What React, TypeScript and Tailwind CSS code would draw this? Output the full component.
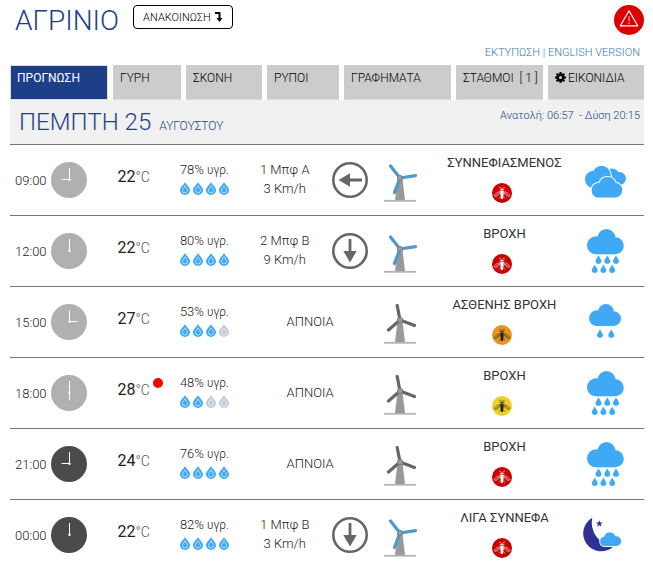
import React from 'react'

type Weather = 'cloudy' | 'rain' | 'lightRain' | 'night'
type Risk = 'red' | 'orange' | 'yellow'

interface IForecast {
  time: string
  hour: number
  night?: boolean
  temp: number
  max?: boolean
  humidity: number
  drops: number
  wind?: { force: string; speed: string; direction: number }
  label: string
  risk: Risk
  weather: Weather
}

const forecasts: IForecast[] = [
  {
    time: '09:00',
    hour: 9,
    temp: 22,
    humidity: 78,
    drops: 4,
    wind: { force: '1 Μπφ Α', speed: '3 Km/h', direction: 0 },
    label: 'ΣΥΝΝΕΦΙΑΣΜΕΝΟΣ',
    risk: 'red',
    weather: 'cloudy',
  },
  {
    time: '12:00',
    hour: 12,
    temp: 22,
    humidity: 80,
    drops: 4,
    wind: { force: '2 Μπφ Β', speed: '9 Km/h', direction: -90 },
    label: 'ΒΡΟΧΗ',
    risk: 'red',
    weather: 'rain',
  },
  { time: '15:00', hour: 3, temp: 27, humidity: 53, drops: 3, label: 'ΑΣΘΕΝΗΣ ΒΡΟΧΗ', risk: 'orange', weather: 'lightRain' },
  { time: '18:00', hour: 6, temp: 28, max: true, humidity: 48, drops: 2, label: 'ΒΡΟΧΗ', risk: 'yellow', weather: 'rain' },
  { time: '21:00', hour: 9, night: true, temp: 24, humidity: 76, drops: 4, label: 'ΒΡΟΧΗ', risk: 'red', weather: 'rain' },
  {
    time: '00:00',
    hour: 12,
    night: true,
    temp: 22,
    humidity: 82,
    drops: 4,
    wind: { force: '1 Μπφ Β', speed: '3 Km/h', direction: -90 },
    label: 'ΛΙΓΑ ΣΥΝΝΕΦΑ',
    risk: 'red',
    weather: 'night',
  },
]

const tabs = ['ΠΡΟΓΝΩΣΗ', 'ΓΥΡΗ', 'ΣΚΟΝΗ', 'ΡΥΠΟΙ', 'ΓΡΑΦΗΜΑΤΑ', 'ΣΤΑΘΜΟΙ\u00a0 [ 1 ]', 'ΕΙΚΟΝΙΔΙΑ']

const Gear = () => (
  <svg viewBox="0 0 11 11" className="mt-1 size-[11px]">
    <circle cx="5.5" cy="5.5" r="2.9" fill="none" stroke="#000" strokeWidth="2.6" />
    {[0, 45, 90, 135].map((angle) => (
      <path
        key={angle}
        d="M4.5 2V0h2v2M4.5 9v2h2V9"
        transform={`rotate(${angle} 5.5 5.5)`}
      />
    ))}
  </svg>
)

const Clock = ({ hour, night }: { hour: number; night?: boolean }) => (
  <svg viewBox="0 0 36 36" className="size-9 shrink-0">
    <circle cx="18" cy="18" r="18" fill={night ? '#4a4a4a' : '#b0b0ae'} />
    <path d="M18.5 18V6" stroke="#fff" strokeWidth="1" />
    <path d="M18.5 17.5V9.5" stroke="#fff" strokeWidth="1" transform={`rotate(${hour * 30} 18.5 17.5)`} />
    <circle cx="18.5" cy="17.7" r="1.2" fill="#fff" />
  </svg>
)

const HumidityDrop = ({ filled }: { filled: boolean }) => (
  <svg viewBox="0 0 10 13" className="h-[13px] w-[10px]">
    <path d="M5 0C6 2.6 10 5 10 8.2a5 4.8 0 0 1-10 0C0 5 4 2.6 5 0Z" fill={filled ? '#3fa9f5' : '#c0ccd4'} />
    <path
      d="M5 3.8C5.6 5.4 7.5 6.8 7.5 8.5a2.5 2.5 0 0 1-5 0C2.5 6.8 4.4 5.4 5 3.8Z"
      fill="none"
      stroke="#fff"
      strokeOpacity="0.75"
      strokeWidth="0.8"
    />
  </svg>
)

const WindArrow = ({ direction }: { direction: number }) => (
  <svg viewBox="0 0 36 36" className="mx-auto size-9">
    <circle cx="18" cy="18" r="16.7" fill="none" stroke="#666" strokeWidth="2.6" />
    <path d="M6.5 18 18 11.3v5.3h12v2.8H18v5.3Z" fill="#666" transform={`rotate(${direction} 18 18)`} />
  </svg>
)

const Turbine = ({ calm }: { calm: boolean }) => (
  <svg viewBox="0 0 34 40" className="mx-auto h-10 w-[34px]">
    <path d="M13.5 17h5L21 38H11Z" fill="#999" />
    <path d="M0 38.8h32" stroke="#b3b3b3" strokeWidth="1.8" />
    {calm ? (
      <path d="M16 16 13.2 1.5M16 16l14.5 5.5M16 16 4.5 26" stroke="#666" strokeWidth="3.2" strokeLinecap="round" />
    ) : (
      <path d="M16 16 6.5 4M16 16l15.5-2.4M16 16l-5.6 14.5" stroke="#4b9bcd" strokeWidth="3.2" strokeLinecap="round" />
    )}
    <circle cx="16" cy="16" r="2.7" fill="#999" stroke="#777" strokeWidth="0.8" />
  </svg>
)

const riskColors = { red: '#c80000', orange: '#e8951f', yellow: '#f0d028' }

const Insect = ({ risk }: { risk: Risk }) => {
  const color = risk === 'red' ? '#fff' : '#222'
  return (
    <svg viewBox="0 0 20 20" className="size-5">
      <circle cx="10" cy="10" r="10" fill={riskColors[risk]} />
      <g fill="none" stroke={color} strokeWidth="0.7" strokeOpacity="0.75">
        <path d="M8.5 8.5C5 9 2 11.2 2.3 13c1.7 1.3 5-.8 6-3.7M11.5 8.5C15 9 18 11.2 17.7 13c-1.7 1.3-5-.8-6-3.7" />
        <path d="M3.5 12.5 8 9.5M16.5 12.5 12 9.5M7 4.3h1.5l.5 1M13 4.3h-1.5l-.5 1M7.5 6.5h5M7.3 15.5l1-2M12.7 15.5l-1-2" />
      </g>
      <path d="M8.8 5.3h2.4V7H8.8Z" fill={color} fillOpacity="0.6" />
      <path d="M8.4 7.5h3.2v3.5l-.5 4.2L10 16.3l-1.1-1.1-.5-4.2Z" fill={color} />
    </svg>
  )
}

const Cloud = () => (
  <>
    <circle cx="9" cy="16.3" r="9" />
    <circle cx="19.5" cy="9" r="9" />
    <circle cx="28.3" cy="16.8" r="8.5" />
    <path d="M9 12h19v13.3H9Z" />
  </>
)

const RainDrop = ({ x, y }: { x: number; y: number }) => (
  <path d="M0-4.2C.7-2 3 0 3 1.4a3 2.8 0 0 1-6 0C-3 0-.7-2 0-4.2Z" transform={`translate(${x} ${y})`} />
)

const WeatherIcon = ({ weather }: { weather: Weather }) => (
  <svg viewBox="0 0 44 44" className="size-11" fill="#3fa9f5">
    {weather === 'rain' && (
      <g transform="translate(4 0)">
        <Cloud />
        {[11.5, 20.3, 29].map((x) => (
          <RainDrop key={x} x={x} y={30.5} />
        ))}
        {[7.7, 16.4, 25.2].map((x) => (
          <RainDrop key={x} x={x} y={39.7} />
        ))}
      </g>
    )}
    {weather === 'lightRain' && (
      <>
        <g transform="translate(6 4) scale(0.87)">
          <Cloud />
        </g>
        <RainDrop x={17} y={33.5} />
        <RainDrop x={28.3} y={33.5} />
      </>
    )}
    {weather === 'cloudy' && (
      <>
        <circle cx="36.5" cy="20.5" r="6.5" />
        <circle cx="29" cy="18" r="7.5" />
        <path
          d="M12 30A8.7 8.7 0 1 1 10.5 12.7A9 9 0 0 1 26.5 13L28 18L24 30Z"
          stroke="#fff"
          strokeWidth="2"
          strokeLinejoin="round"
          paintOrder="stroke"
        />
        <path
          d="M14 39.5A7.5 7.5 0 0 1 13.8 25.2A3 3 0 0 1 16.3 25A8.6 8.6 0 0 1 32.7 24.8A7.4 7.4 0 0 1 32.8 39.5Z"
          stroke="#fff"
          strokeWidth="2"
          paintOrder="stroke"
        />
      </>
    )}
    {weather === 'night' && (
      <>
        <path d="M9.3 4.7A18 18 0 1 0 30.5 33.5A24 24 0 0 1 9.3 4.7Z" fill="#2e3192" />
        <path d="m16.3 7.2.9 2.2 2.4.2-1.8 1.5.6 2.4-2.1-1.3-2.1 1.3.6-2.4-1.8-1.5 2.4-.2Z" fill="#2e3192" />
        <path
          d="M21 33A4.7 4.7 0 0 1 21.3 23.7A5.8 5.8 0 0 1 32.3 23.3A4.9 4.9 0 1 1 33 33Z"
          stroke="#fff"
          strokeWidth="1.8"
          paintOrder="stroke"
        />
      </>
    )}
  </svg>
)

const ForecastRow = ({ item }: { item: IForecast }) => (
  <tr className="h-[71px] *:border-b *:border-[#777]">
    <td>
      <div className="flex items-center gap-[3px] pl-[5px]">
        <span className="w-[33px]">{item.time}</span>
        <Clock hour={item.hour} night={item.night} />
      </div>
    </td>
    <td>
      <div className="mb-[6px] flex items-baseline pl-[25px]">
        <span className="text-base font-normal">{item.temp}</span>
        <span className="text-sm text-[#555]">°C</span>
        {item.max && <span className="ml-[3px] size-[10px] shrink-0 self-start rounded-full bg-[#f00]" />}
      </div>
    </td>
    <td className="text-center">
      <div className="mb-[6px] flex flex-col gap-[3px] pl-[2px]">
        <p>
          {item.humidity}% <span className="text-xs">υγρ.</span>
        </p>
        <div className="flex justify-center gap-[3px]">
          {[1, 2, 3, 4].map((n) => (
            <HumidityDrop key={n} filled={n <= item.drops} />
          ))}
        </div>
      </div>
    </td>
    {item.wind ? (
      <>
        <td className="pr-[2px] pb-[2px] text-center">
          <p>{item.wind.force}</p>
          <p>{item.wind.speed}</p>
        </td>
        <td className="pr-1">
          <WindArrow direction={item.wind.direction} />
        </td>
      </>
    ) : (
      <td colSpan={2} className="pr-[2px] pb-[2px] text-center">
        ΑΠΝΟΙΑ
      </td>
    )}
    <td className="pt-1 pr-1">
      <Turbine calm={!item.wind} />
    </td>
    <td>
      <div className="mb-1 flex flex-col items-center gap-[11px]">
        <span className="font-normal text-[#333]">{item.label}</span>
        <div className="pr-1">
          <Insect risk={item.risk} />
        </div>
      </div>
    </td>
    <td className="pl-[2px]">
      <WeatherIcon weather={item.weather} />
    </td>
  </tr>
)

const App = () => {
  return (
    <main className="bg-white pr-[9px] pl-[10px] font-['Roboto','Liberation_Sans',sans-serif] text-[13px] leading-[19px] font-light text-[#222]">
      <header className="flex h-10 items-start pt-[5px]">
        <h1 className="pl-[5px] text-[28px] leading-8 text-[#1d3f87]">ΑΓΡΙΝΙΟ</h1>
        <button
          type="button"
          className="ml-[14px] flex h-6 w-[100px] items-center justify-center gap-1 rounded border border-black text-[11px] text-black"
        >
          ΑΝΑΚΟΙΝΩΣΗ
          <svg viewBox="0 0 8 10" className="h-[10px] w-2">
            <path d="M0 1h4.5v6" fill="none" stroke="#000" strokeWidth="2" />
            <path d="M1.5 6h6l-3 4Z" />
          </svg>
        </button>
        <a href="#alerts" aria-label="Προειδοποίηση" className="ml-auto">
          <svg viewBox="0 0 30 30" className="size-[30px]">
            <circle cx="15" cy="15" r="15" fill="#dc0000" />
            <path d="M15 5.8 23.7 20.8H6.3Z" fill="none" stroke="#fff" strokeWidth="1.2" strokeLinejoin="round" />
            <path d="M15 11.3v5.2M15 17.7v1.5" stroke="#fff" strokeOpacity="0.8" strokeWidth="1" />
          </svg>
        </a>
      </header>
      <div className="flex h-[25px] items-center justify-end pr-1 text-[11px] text-[#337ab7]">
        <a href="#print">ΕΚΤΥΠΩΣΗ</a>
        <span className="whitespace-pre"> | </span>
        <a href="#english">ENGLISH VERSION</a>
      </div>
      <nav className="grid grid-cols-[98fr_68fr_76fr_72fr_107fr_87fr_96fr] gap-[5px]">
        {tabs.map((tab, i) => (
          <button
            key={tab}
            type="button"
            className={`flex h-[35px] items-start gap-[2px] border border-b-[#ddd] pt-[2px] pl-[6px] text-left text-xs leading-5 whitespace-nowrap ${
              i === 0 ? 'border-[#ddd] bg-[#1d3f87] font-normal text-white' : 'border-[#ccc] bg-[#ccc] text-black'
            }`}
          >
            {i === tabs.length - 1 && <Gear />}
            {tab}
          </button>
        ))}
      </nav>
      <div className="flex h-[45px] items-start justify-between border-b border-[#777] bg-[#f1f1f1] pr-1 pl-[9px] text-[#1d3f87]">
        <h2 className="flex items-baseline gap-2 pt-[6px] text-2xl leading-8">
          ΠΕΜΠΤΗ 25 <span className="text-xs">ΑΥΓΟΥΣΤΟΥ</span>
        </h2>
        <p className="pt-[6px] text-[11px]">Ανατολή: 06:57&nbsp; - Δύση 20:15</p>
      </div>
      <table className="w-full table-fixed border-separate border-spacing-0">
        <colgroup>
          <col className="w-[13%]" />
          <col className="w-[11%]" />
          <col className="w-[13%]" />
          <col className="w-[13%]" />
          <col className="w-[8%]" />
          <col className="w-[8%]" />
          <col className="w-[24%]" />
          <col className="w-[10%]" />
        </colgroup>
        <tbody>
          {forecasts.map((item) => (
            <ForecastRow key={item.time} item={item} />
          ))}
        </tbody>
      </table>
    </main>
  )
}

export default App
